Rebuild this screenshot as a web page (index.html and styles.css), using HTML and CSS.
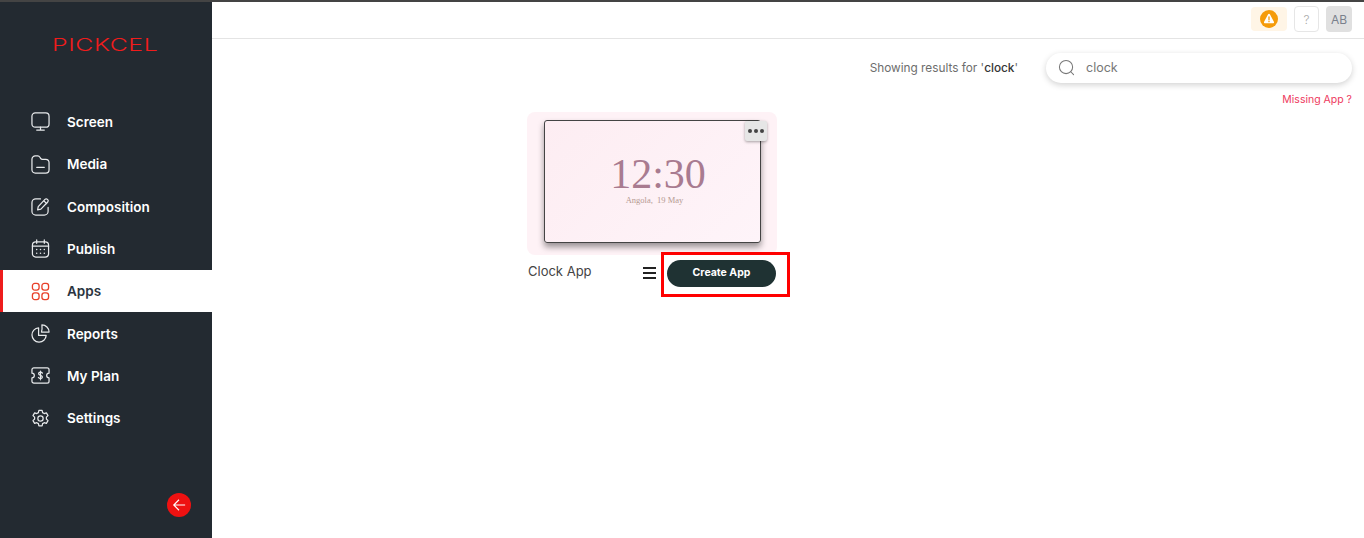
FILE: index.html
```html
<!DOCTYPE html>
<html lang="en">
<head>
<meta charset="utf-8">
<title>Pickcel Apps</title>
<link rel="stylesheet" href="styles.css">
</head>
<body>
<div class="app">
  <aside class="sidebar">
    <div class="logo"><span class="logo-text">PICKCEL</span></div>
    <nav class="nav">
      <a class="nav-item">
        <svg class="nav-icon" viewBox="0 0 20 20"><rect x="1" y="1" width="18" height="15" rx="3.5"/><path d="M10 16v3M6 19h8"/></svg>
        <span class="nav-label">Screen</span>
      </a>
      <a class="nav-item">
        <svg class="nav-icon" viewBox="0 0 20 20"><path d="M1 4.500A3.500 3.500 0 0 1 4.500 1h2.700c1 0 1.600.5 2.200 1.400l.7 1.100c.5.800 1 1.100 2 1.100h3.400A3.500 3.500 0 0 1 19 8v7.500a3.500 3.500 0 0 1-3.500 3.500h-11A3.500 3.500 0 0 1 1 15.500z"/><path d="M6 13h8"/></svg>
        <span class="nav-label">Media</span>
      </a>
      <a class="nav-item">
        <svg class="nav-icon" viewBox="0 0 20 20"><path d="M10 2H5a4 4 0 0 0-4 4v9a4 4 0 0 0 4 4h9a4 4 0 0 0 4-4v-4"/><path d="M7 13.500l.6-3.300 7.100-7.700a1.800 1.800 0 0 1 2.600 0l.3.3a1.800 1.800 0 0 1 0 2.500l-7.200 7.500zM13.500 4l3 3"/></svg>
        <span class="nav-label">Composition</span>
      </a>
      <a class="nav-item">
        <svg class="nav-icon" viewBox="0 0 20 20"><rect x="1.500" y="3" width="17" height="16" rx="3.500"/><path d="M1.500 7.500h17M6 1v3.500M14 1v3.500"/><path class="dots" d="M6 11h.01M10 11h.01M14 11h.01M6 15h.01M10 15h.01M14 15h.01"/></svg>
        <span class="nav-label">Publish</span>
      </a>
      <a class="nav-item active">
        <svg class="nav-icon" viewBox="0 0 20 20"><rect x="1.500" y="1.500" width="7" height="7" rx="2.500"/><rect x="11.500" y="1.500" width="7" height="7" rx="2.500"/><rect x="1.500" y="11.500" width="7" height="7" rx="2.500"/><rect x="11.500" y="11.500" width="7" height="7" rx="2.500"/></svg>
        <span class="nav-label">Apps</span>
      </a>
      <a class="nav-item">
        <svg class="nav-icon" viewBox="0 0 20 20"><path d="M8 4a7.500 7.500 0 1 0 8 8H8z"/><path d="M11.500 1a7.500 7.500 0 0 1 7.500 7.500h-8c.7-2.400.8-5 .5-7.500z"/></svg>
        <span class="nav-label">Reports</span>
      </a>
      <a class="nav-item">
        <svg class="nav-icon" viewBox="0 0 20 20"><path d="M3 2h14a2 2 0 0 1 2 2v3.500a2.500 2.500 0 0 0 0 5V16a2 2 0 0 1-2 2H3a2 2 0 0 1-2-2v-3.500a2.500 2.500 0 0 0 0-5V4a2 2 0 0 1 2-2z"/><path d="M12 7.500c-.5-.7-1.200-1-2-1-1.200 0-2 .6-2 1.600 0 2.200 4 1.300 4 3.500 0 1-.8 1.600-2 1.600-.9 0-1.700-.4-2.200-1.100M10 5.500v9"/></svg>
        <span class="nav-label">My Plan</span>
      </a>
      <a class="nav-item">
        <svg class="nav-icon" viewBox="0 0 20 20"><circle cx="10" cy="10" r="2.800"/><path d="M8.300 1.500h3.400l.5 2.300 1.700 1 2.300-.7 1.700 2.900-1.700 1.600v2l1.700 1.600-1.700 2.900-2.300-.7-1.700 1-.5 2.300H8.300l-.5-2.300-1.700-1-2.300.7-1.700-2.900 1.700-1.600v-2L2.100 7l1.700-2.900 2.300.7 1.700-1z"/></svg>
        <span class="nav-label">Settings</span>
      </a>
    </nav>
    <button class="collapse" type="button" aria-label="Collapse">
      <svg viewBox="0 0 16 16"><path d="M15 8H2M8 2L2 8l6 6"/></svg>
    </button>
  </aside>
  <main class="main">
    <header class="topbar">
      <div class="alert-chip">
        <svg class="alert-icon" viewBox="0 0 18 18"><circle cx="9" cy="9" r="9"/><path class="alert-tri" d="M9 3.800c.4 0 .7.200.9.500l4 7.400c.4.700-.1 1.500-.9 1.500H5c-.8 0-1.300-.8-.9-1.500l4-7.400c.2-.3.500-.5.900-.5z"/><path class="alert-mark" d="M9 6.800v3M9 11.300v.4"/></svg>
      </div>
      <div class="help">?</div>
      <div class="avatar">AB</div>
    </header>
    <section class="search-row">
      <p class="results">Showing results for '<strong>clock</strong>'</p>
      <div class="search-col">
        <div class="search">
          <svg class="search-icon" viewBox="0 0 18 18"><circle cx="8.500" cy="8.500" r="7"/><path d="M13.500 13.500l3 3"/></svg>
          <span class="search-value">clock</span>
        </div>
        <a class="missing">Missing App ?</a>
      </div>
    </section>
    <section class="cards">
      <article class="card">
        <div class="thumb-wrap">
          <div class="thumb">
            <div class="time">12:30</div>
            <div class="date">Angola,&nbsp; 19 May</div>
            <button class="more" type="button" aria-label="More"><i></i><i></i><i></i></button>
          </div>
        </div>
        <div class="card-foot">
          <span class="card-title">Clock App</span>
          <span class="burger"><i></i><i></i><i></i></span>
          <div class="highlight"><button class="create" type="button">Create App</button></div>
        </div>
      </article>
    </section>
  </main>
</div>
</body>
</html>
```
FILE: styles.css
```css
* { box-sizing: border-box; }
html, body { margin: 0; height: 100%; overflow: hidden; background: #fff; }
body { font-family: Inter, "Noto Sans", sans-serif; color: #333; }
.app { display: flex; height: 538px; border-top: 2px solid #444; }

.sidebar { width: 212px; flex: none; background: #232a31; display: flex; flex-direction: column; }
.logo { height: 98.7px; padding: 33px 0 0 52px; }
.logo-text { display: block; width: 72px; font-size: 17px; line-height: 20px; font-weight: 300; letter-spacing: .4px; color: #f01c1c; transform: scaleX(1.46); transform-origin: left center; white-space: nowrap; }
.nav { display: flex; flex-direction: column; }
.nav-item { height: 42.35px; display: flex; align-items: center; gap: 17px; padding-left: 31px; color: #fff; font-size: 13.500px; font-weight: 600; }
.nav-icon { width: 19px; height: 19px; flex: none; fill: none; stroke: #e8eaec; stroke-width: 1.300; stroke-linecap: round; stroke-linejoin: round; }
.nav-icon .dots { stroke-width: 1.600; }
.nav-item.active { background: #fff; color: #2b3440; border-left: 3px solid #ee1c1c; padding-left: 28px; }
.nav-item.active .nav-icon { stroke: #e8402a; stroke-width: 1.400; }
.collapse { margin: auto 21px 21px auto; width: 24px; height: 24px; padding: 5px; border: 0; border-radius: 50%; background: #ee1111; display: flex; }
.collapse svg { width: 14px; height: 14px; fill: none; stroke: #fff; stroke-width: 1.300; }

.main { flex: 1; min-width: 0; display: flex; flex-direction: column; }
.topbar { height: 37px; flex: none; border-bottom: 1px solid #e4e4e4; display: flex; align-items: center; justify-content: flex-end; gap: 7px; padding: 0 12px 2px 0; }
.alert-chip { width: 36px; height: 24px; background: #fff5e6; border-radius: 4px; display: flex; align-items: center; justify-content: center; }
.alert-icon { width: 18px; height: 18px; }
.alert-icon circle { fill: #f59b0a; }
.alert-tri { fill: #fff; }
.alert-mark { stroke: #f59b0a; stroke-width: 1.300; stroke-linecap: round; }
.help, .avatar { height: 26px; border-radius: 4px; display: flex; align-items: center; justify-content: center; font-size: 12px; }
.help { width: 25px; border: 1px solid #e6e6e6; color: #aaa; font-weight: 300; }
.avatar { width: 26px; background: #e0e0e0; color: #7a808c; }

.search-row { display: flex; justify-content: flex-end; gap: 28px; padding: 14px 12px 0 0; height: 73px; flex: none; }
.results { margin: 7px 0 0; font-size: 11.800px; line-height: 16px; color: #6d6d6d; }
.results strong { font-weight: 500; color: #333; }
.search-col { width: 306px; display: flex; flex-direction: column; align-items: flex-end; }
.search { width: 100%; height: 30px; border-radius: 15px; background: #fff; box-shadow: 0 2px 6px rgba(0,0,0,.18); display: flex; align-items: center; gap: 11px; padding: 0 0 1px 12px; }
.search-icon { width: 17px; height: 17px; fill: none; stroke: #777; stroke-width: 1.100; stroke-linecap: round; }
.search-value { font-size: 12.500px; color: #777; }
.missing { margin-top: 10px; font-size: 10.500px; line-height: 13px; color: #ee3a5e; }

.cards { padding-left: 315px; }
.card { width: 263px; }
.thumb-wrap { width: 250px; height: 143px; background: #fef2f6; border-radius: 8px; padding: 8px 0 0 17px; }
.thumb { position: relative; width: 217px; height: 123px; border: 1px solid #444; border-radius: 3px; background: linear-gradient(135deg, #fdedf2, #fef4f9); box-shadow: 0 4px 6px rgba(0,0,0,.4); text-align: center; font-family: "Liberation Serif", serif; }
.time { margin-top: 30px; padding-left: 11px; font-size: 42px; line-height: 46px; color: #a97b90; }
.date { margin-top: -2px; padding-left: 4px; font-size: 8.500px; line-height: 10px; color: #b59a92; }
.more { position: absolute; top: 0; right: -7px; width: 22px; height: 20px; padding: 0; border: 0; border-radius: 2px; background: #e6e6e6; box-shadow: 0 1px 3px rgba(0,0,0,.35); display: flex; align-items: center; justify-content: center; gap: 2px; }
.more i { width: 4px; height: 4px; border-radius: 50%; background: #444; }

.card-foot { display: flex; align-items: center; height: 45px; margin-top: -3px; }
.card-title { width: 116px; padding: 0 0 8px 1px; font-size: 13px; color: #444; }
.burger { width: 13px; display: flex; flex-direction: column; gap: 3px; margin-bottom: 3px; }
.burger i { height: 2px; background: #222; }
.highlight { margin-left: 5px; width: 129px; height: 45px; border: 3px solid #f00; padding: 5px 0 0 3px; }
.create { width: 109px; height: 27px; padding: 0 0 2px; border: 0; border-radius: 14px; background: #1f3233; color: #fff; font: 700 10.500px Inter, sans-serif; }
```
